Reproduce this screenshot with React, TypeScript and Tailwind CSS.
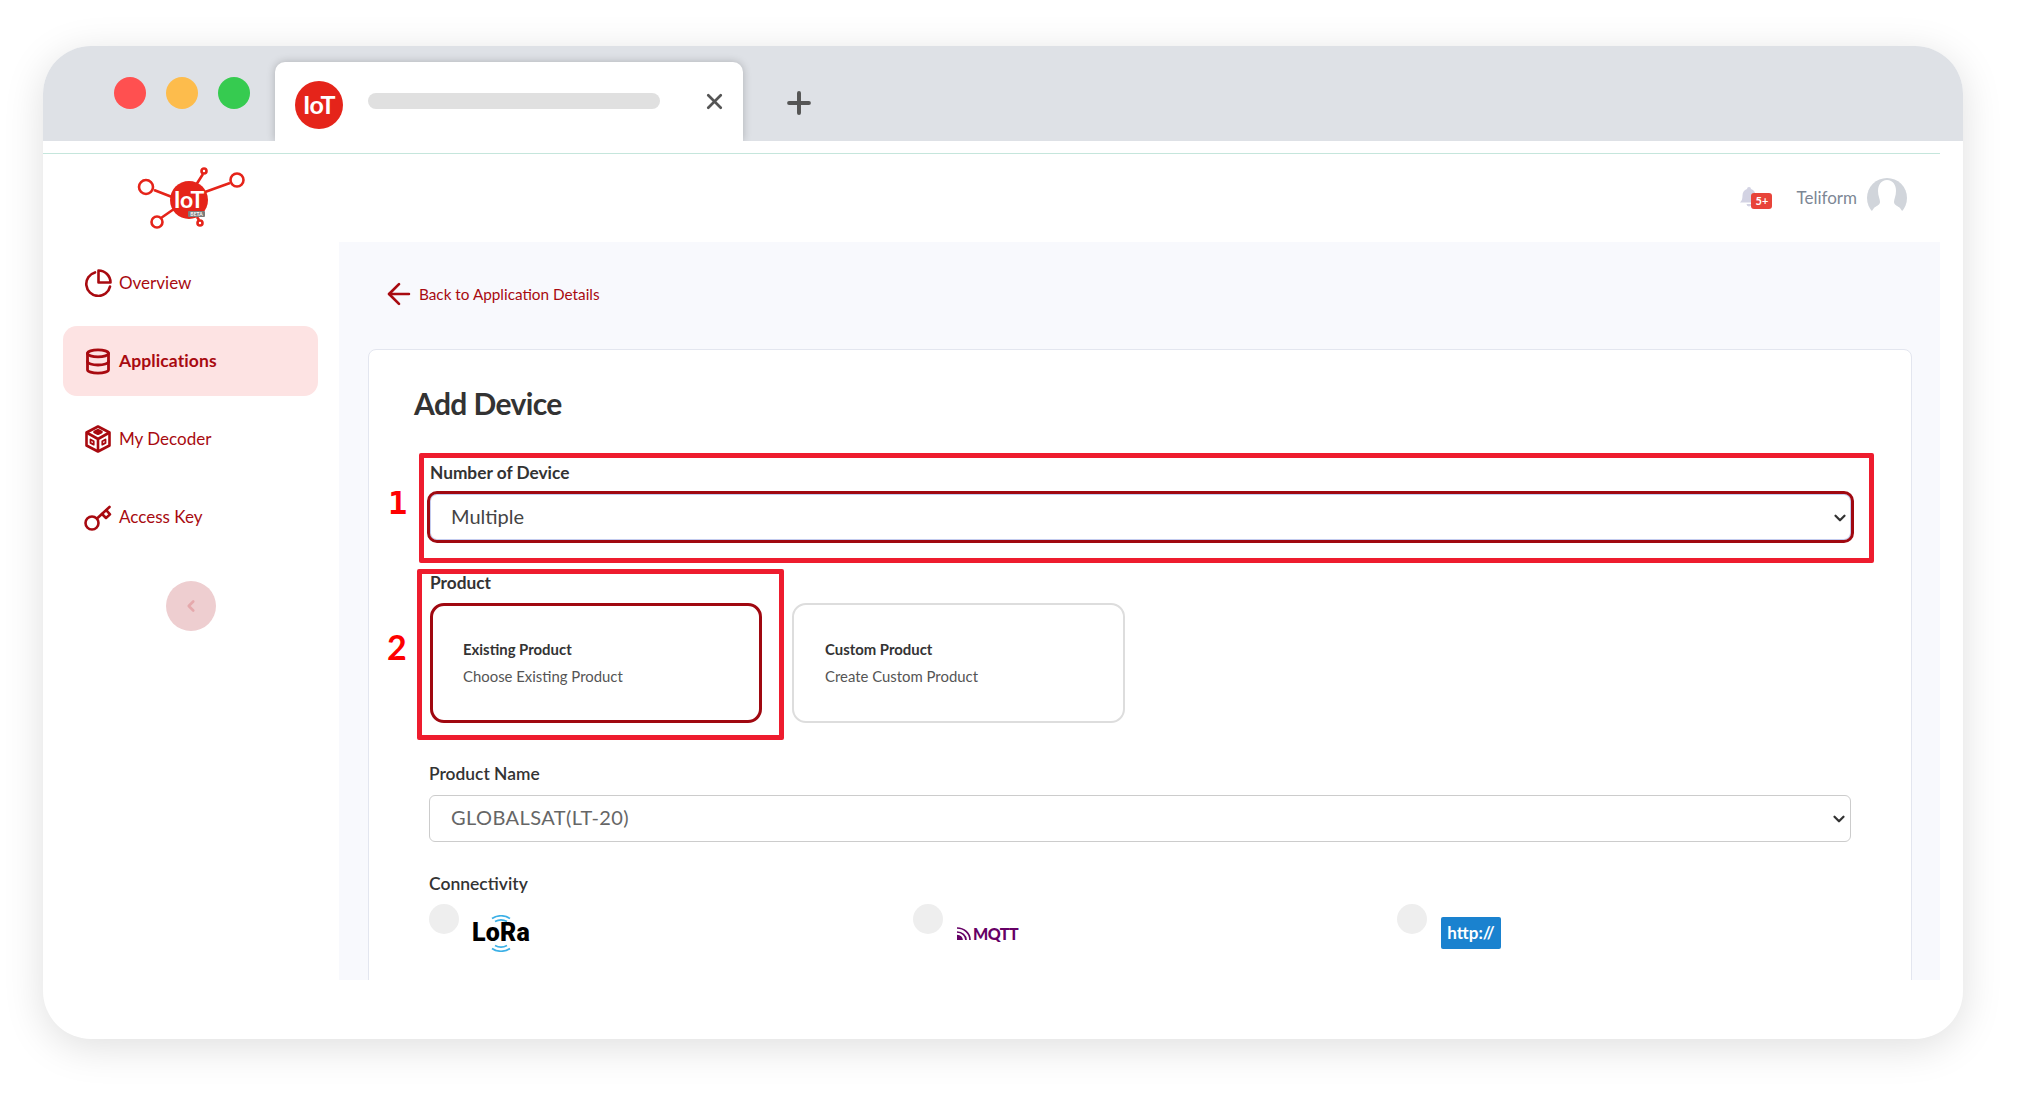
import React from 'react';
import { ArrowLeft, ChevronDown, ChevronLeft, Database, Plus, X } from 'lucide-react';

const nunito = "font-['Lato','Noto_Sans',sans-serif]";

const OverviewIcon = () => (
    <svg width="28" height="28" viewBox="0 0 28 28" fill="none" stroke="#a80a10" strokeWidth="2.6" strokeLinejoin="round" strokeLinecap="round">
        <path d="M11 3.4A12 12 0 1 0 26 17.6" />
        <path d="M14.5 1.5a12 12 0 0 1 12 12h-12z" />
    </svg>
);

const DecoderIcon = () => (
    <svg width="26" height="28" viewBox="0 0 26 28" fill="none" stroke="#a80a10" strokeWidth="2.6" strokeLinejoin="round">
        <path d="M13 1.5 24.5 7.5v13L13 26.5 1.5 20.5v-13z" />
        <path d="M1.5 7.5 13 14l11.5-6.5M13 14v12.5" />
        <path d="M13 5.2 16.5 7 13 8.8 9.5 7z" fill="#a80a10" />
        <path d="M5.5 14.5l3.2 1.8v3.4l-3.2-1.8zM20.5 14.5l-3.2 1.8v3.4l3.2-1.8z" strokeWidth="1.8" />
    </svg>
);

const KeyIcon = () => (
    <svg width="28" height="27" viewBox="0 0 28 27" fill="none" stroke="#a80a10" strokeWidth="2.6" strokeLinecap="round" strokeLinejoin="round">
        <circle cx="8" cy="19" r="6.5" />
        <path d="M13 14.5 25.5 3" />
        <path d="M18 10l4 4 4-3.6-3.8-4.2" />
    </svg>
);

const SideLogo = () => (
    <svg width="120" height="70" viewBox="0 0 120 70" fill="none" stroke="#e5241a" strokeWidth="2.6">
        <path d="M24 25 42 32M100 18 75 27M73 9 66 20M31 53 44 44M67 52 69 55" />
        <circle cx="16" cy="22" r="7" fill="#fff" />
        <circle cx="107" cy="15" r="6.5" fill="#fff" />
        <circle cx="74" cy="6" r="2.5" fill="#fff" />
        <circle cx="27" cy="57" r="5.5" fill="#fff" />
        <circle cx="70" cy="58" r="2.5" fill="#fff" />
        <circle cx="59" cy="35" r="19" fill="#e5241a" stroke="none" />
        <text x="59" y="43" textAnchor="middle" fill="#fff" stroke="none" fontFamily="Lato, sans-serif" fontWeight="700" fontSize="23">IoT</text>
        <rect x="58" y="46" width="17" height="6" rx="1" fill="#7c7c7c" stroke="none" />
        <text x="66.5" y="51" textAnchor="middle" fill="#fff" stroke="none" fontFamily="Lato, sans-serif" fontWeight="700" fontSize="5">BETA</text>
    </svg>
);

const navItems = [
    { label: 'Overview', icon: <OverviewIcon /> },
    { label: 'Applications', icon: <Database size={29} strokeWidth={2.4} color="#a80a10" />, active: true },
    { label: 'My Decoder', icon: <DecoderIcon /> },
    { label: 'Access Key', icon: <KeyIcon /> },
];

const LoraLogo = () => (
    <div className="mt-[11px] -ml-[2px] flex w-[60px] flex-col items-center">
        <svg width="22" height="9" viewBox="0 0 22 9" fill="none" stroke="#3cb0e6" strokeWidth="1.6">
            <path d="M2 3.5C7-.2 15-.2 20 3.5M5 6.5c4-2.2 8-2.2 12 0" />
        </svg>
        <span className="h-[19px] font-['Roboto',sans-serif] text-[25px] leading-[18px] font-black tracking-[0.2px] text-black">LoRa</span>
        <svg width="22" height="9" viewBox="0 0 22 9" fill="none" stroke="#3cb0e6" strokeWidth="1.6">
            <path d="M5 2.5c4 2.2 8 2.2 12 0M2 5.5C7 9.2 15 9.2 20 5.5" />
        </svg>
    </div>
);

const MqttLogo = () => (
    <div className="mt-[21px] flex items-center gap-[2px]">
        <svg width="14" height="13" viewBox="0 0 14 13" fill="none" stroke="#660066" strokeWidth="1.7">
            <path d="M0 1c7 0 13 5 13 12M0 5c5 0 9 3.500 9 8" />
            <path d="M0 8.500c3 0 5 2 5 4.500H0z" fill="#660066" />
        </svg>
        <span className="font-['Lato',sans-serif] text-[16px] leading-[17px] font-black tracking-[-0.5px] text-[#660066]">MQTT</span>
    </div>
);

const HttpLogo = () => (
    <div className="mt-[13px] flex h-[32px] w-[60px] items-center justify-center rounded-[2px] bg-[#1a82cf] font-['Lato',sans-serif] text-[17px] font-bold text-white">
        http://
    </div>
);

const App: React.FC = () => {
    return (
        <div className="h-[1093px] w-[2020px] overflow-hidden bg-white pt-[46px] pl-[43px]">
            <div className="h-[993px] w-[1920px] overflow-hidden rounded-[48px] bg-white shadow-[0_8px_40px_rgba(0,0,0,0.13)]">
                {/* browser tab bar */}
                <div className="flex h-[95px] items-start overflow-hidden bg-[#dee1e6] pl-[71px]">
                    <div className="mt-[31px] flex gap-[20px]">
                        <span className="h-[32px] w-[32px] rounded-full bg-[#ff5050]" />
                        <span className="h-[32px] w-[32px] rounded-full bg-[#fdbc4c]" />
                        <span className="h-[32px] w-[32px] rounded-full bg-[#36cb50]" />
                    </div>
                    <div className="mt-[16px] ml-[25px] flex h-[79px] w-[468px] items-start rounded-t-[10px] bg-white pl-[20px] shadow-[0_0_8px_rgba(0,0,0,0.22)]">
                        <div className="mt-[19px] flex h-[48px] w-[48px] items-center justify-center rounded-full bg-[#e5241a] font-['Lato',sans-serif] text-[25px] font-bold tracking-[-0.5px] text-white">
                            IoT
                        </div>
                        <div className="mt-[31px] ml-[25px] h-[16px] w-[292px] rounded-full bg-[#e0e0e0]" />
                        <X size={25} strokeWidth={2.6} color="#555" className="mt-[27px] ml-[42px]" />
                    </div>
                    <Plus size={34} strokeWidth={2.8} color="#555" className="mt-[40px] ml-[39px]" />
                </div>

                <div className="h-[13px] w-[1897px] border-b border-[#c5e6dc]" />

                <div className="flex w-[1897px]">
                    {/* sidebar */}
                    <aside className="w-[296px] shrink-0">
                        <div className="h-[94px] pt-[11px] pl-[87px]">
                            <SideLogo />
                        </div>
                        <nav className="ml-[20px] flex w-[255px] flex-col gap-[8px]">
                            {navItems.map((item) => (
                                <div
                                    key={item.label}
                                    className={`flex h-[70px] items-center gap-[7px] rounded-[14px] pl-[21px] text-[#a80a10] ${nunito} ${item.active ? 'bg-[#fde3e3] text-[17.500px] font-bold tracking-[0.1px]' : 'text-[17px]'}`}
                                >
                                    <span className="flex w-[28px] justify-center">{item.icon}</span>
                                    {item.label}
                                </div>
                            ))}
                        </nav>
                        <div className="mt-[29px] ml-[123px] flex h-[50px] w-[50px] items-center justify-center rounded-full bg-[#eeced0]">
                            <ChevronLeft size={18} strokeWidth={3.5} color="#e5a9ac" />
                        </div>
                    </aside>

                    <div className="min-w-0 flex-1">
                        {/* top bar */}
                        <header className="flex h-[88px] items-start justify-end pr-[33px]">
                            <div className="relative mt-[33px] mr-[38px]">
                                <svg width="18" height="21" viewBox="0 0 18 21" fill="#d3d3e3">
                                    <path d="M9 0a2 2 0 0 1 2 2c3 .8 4.500 3.500 4.500 6.500 0 4 1 5.500 2.500 7H0c1.500-1.500 2.500-3 2.500-7C2.500 5.500 4 2.800 7 2a2 2 0 0 1 2-2zM6.500 17h5a2.500 2.500 0 0 1-5 0z" />
                                </svg>
                                <span className="absolute top-[6px] left-[11px] flex h-[16px] w-[21px] items-center justify-center rounded-[3px] bg-[#e8443a] font-['Lato',sans-serif] text-[11px] font-bold text-white">
                                    5+
                                </span>
                            </div>
                            <span className={`mt-[33px] text-[17px] leading-[22px] text-[#7d8795] ${nunito}`}>Teliform</span>
                            <svg width="40" height="34" viewBox="0 0 40 34" className="mt-[24px] ml-[10px]">
                                <circle cx="20" cy="20" r="20" fill="#d1d5db" />
                                <path
                                    fill="#fff"
                                    d="M20 2c6 0 9 5 9 11 0 5-2 8-2 11 0 3 4 4 6 6l7 10H0l7-10c2-2 6-3 6-6 0-3-2-6-2-11 0-6 3-11 9-11z"
                                />
                            </svg>
                        </header>

                        {/* main */}
                        <main className="h-[738px] overflow-hidden bg-[#f8f9fd] pl-[29px]">
                            <div className={`flex h-[107px] items-start pt-[35px] pl-[14px] text-[15.300px] text-[#a80a10] ${nunito}`}>
                                <div className="flex h-[34px] items-center gap-[3px]">
                                    <ArrowLeft size={34} strokeWidth={1.9} />
                                    Back to Application Details
                                </div>
                            </div>

                            <div className="h-[680px] w-[1544px] rounded-t-[8px] border border-[#e3e6ef] bg-white pt-[35px] pl-[46px] font-['Lato',sans-serif] text-[#333]">
                                <h1 className="-ml-[1px] text-[30px] leading-[36px] font-bold tracking-[-0.6px]">Add Device</h1>

                                <div className="relative mt-[32px] ml-[4px] w-[1455px] rounded-[2px] border-[5px] border-[#ee1c2e] pt-[3px] pr-[15px] pb-[15px] pl-[3px]">
                                    <span className="absolute top-[29px] -left-[36px] font-['DejaVu_Sans_Mono',monospace] text-[32px] leading-[32px] font-bold text-[#fe0000]">1</span>
                                    <label className="block pl-[3px] text-[17.300px] leading-[24px] font-bold">Number of Device</label>
                                    <div className="relative mt-[6px]">
                                        <select
                                            defaultValue="Multiple"
                                            className={`h-[52px] w-full appearance-none rounded-[10px] border-[3px] border-[#a00810] bg-white pb-[2px] pl-[21px] text-[20px] text-[#444] shadow-[inset_0_0_0_1px_#c3cbee] ${nunito}`}
                                        >
                                            <option>Multiple</option>
                                        </select>
                                        <ChevronDown size={18} strokeWidth={3} color="#333" className="absolute top-[18px] right-[5px]" />
                                    </div>
                                </div>

                                <div className="mt-[6px] flex items-end gap-[8px]">
                                    <div className="relative ml-[2px] w-[367px] rounded-[2px] border-[5px] border-[#ee1c2e] pt-0 pr-[17px] pb-[12px] pl-[8px]">
                                        <span className="absolute top-[57px] -left-[35px] font-['Lato',sans-serif] text-[34px] leading-[32px] font-bold text-[#fe0000]">2</span>
                                        <label className="block text-[17.300px] leading-[18px] font-bold">Product</label>
                                        <div className="mt-[11px] h-[120px] rounded-[14px] border-[3px] border-[#a00810] pt-[32px] pl-[30px]">
                                            <div className="text-[14.900px] leading-[22px] font-bold">Existing Product</div>
                                            <div className="mt-[5px] text-[14.900px] leading-[22px] text-[#555]">Choose Existing Product</div>
                                        </div>
                                    </div>
                                    <div className="mb-[17px] h-[120px] w-[333px] rounded-[14px] border-[2px] border-[#ddd] pt-[33px] pl-[31px]">
                                        <div className="text-[14.900px] leading-[22px] font-bold">Custom Product</div>
                                        <div className="mt-[5px] text-[14.900px] leading-[22px] text-[#555]">Create Custom Product</div>
                                    </div>
                                </div>

                                <label className="mt-[22px] block pl-[14px] text-[17.400px] leading-[24px] font-semibold">Product Name</label>
                                <div className="relative mt-[9px] ml-[14px] w-[1422px]">
                                    <select
                                        defaultValue="GLOBALSAT(LT-20)"
                                        className={`h-[47px] w-full appearance-none rounded-[6px] border border-[#ccc] bg-white pb-[3px] pl-[21px] text-[20px] tracking-[0.4px] text-[#666] ${nunito}`}
                                    >
                                        <option>GLOBALSAT(LT-20)</option>
                                    </select>
                                    <ChevronDown size={18} strokeWidth={3} color="#333" className="absolute top-[15px] right-[3px]" />
                                </div>

                                <label className="mt-[30px] block pl-[14px] text-[17.500px] leading-[24px] font-semibold">Connectivity</label>
                                <div className="mt-[8px] ml-[14px] grid w-[1452px] grid-cols-3">
                                    <div className="flex items-start gap-[14px]">
                                        <span className="h-[30px] w-[30px] rounded-full bg-[#eee]" />
                                        <LoraLogo />
                                    </div>
                                    <div className="flex items-start gap-[14px]">
                                        <span className="h-[30px] w-[30px] rounded-full bg-[#eee]" />
                                        <MqttLogo />
                                    </div>
                                    <div className="flex items-start gap-[14px]">
                                        <span className="h-[30px] w-[30px] rounded-full bg-[#eee]" />
                                        <HttpLogo />
                                    </div>
                                </div>
                            </div>
                        </main>
                    </div>
                </div>
            </div>
        </div>
    );
};

export default App;
